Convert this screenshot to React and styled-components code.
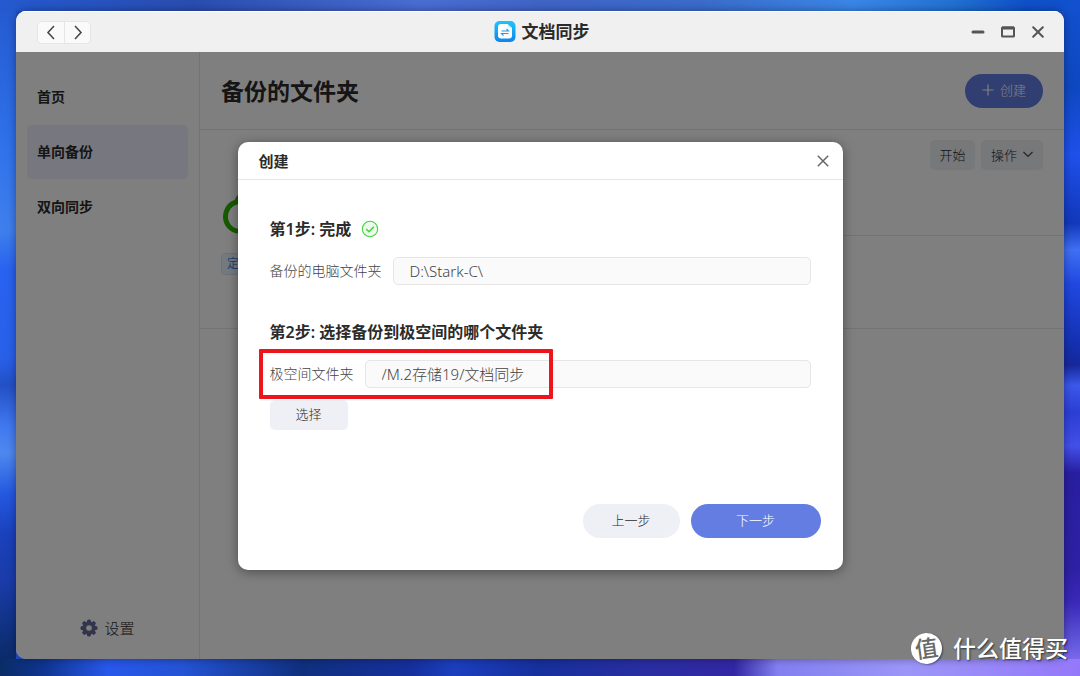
import React, { useState } from 'react';
import styled, { createGlobalStyle, ThemeProvider } from 'styled-components';

const theme = {
	colors: {
		primary: '#637de2',
		text: '#2b2b2b',
		label: '#444444',
		soft: '#eff0f5',
		line: '#e6e6e6',
		field: '#fafafa',
		green: '#3fd43a',
		red: '#ee141c',
	},
};

const GlobalStyle = createGlobalStyle`
	* {
		box-sizing: border-box;
	}
	body {
		margin: 0;
		font-family: "Noto Sans", "Noto Sans CJK SC", sans-serif;
		color: ${theme.colors.text};
	}
	button, input {
		font-family: inherit;
	}
	button {
		cursor: pointer;
	}
	h1, h2, h3, p {
		margin: 0;
	}
`;

const Desktop = styled.div`
	position: relative;
	display: flex;
	min-height: 100vh;
	padding: 11px 16px 17px;
	background:
		linear-gradient(90deg, #2459cf 0%, #2a4db0 18%, #4a6dd3 39%, #4064c6 50%, #3a6ccb 65%, #3a86e6 79%, #2272d2 88%, #0f50c8 95%, #1250cf 100%) top / 100% 11px no-repeat,
		linear-gradient(90deg, #0a2c66 0%, #0f3590 4%, #2858ea 10%, #2453d4 17%, #10307e 28%, #16309c 38%, #1c3fbe 42%, #16309c 50%, #2a2ea0 60%, #3327a4 68%, #8280f0 72%, #9c96f8 84%, #9478fa 100%) bottom / 100% 17px no-repeat,
		linear-gradient(180deg, #2459cf 0%, #2f72ea 22%, #3f7fec 34%, #2862f0 40%, #2860e8 53%, #2350c4 57%, #4078f0 63%, #4f88ee 67%, #2458e0 73%, #1a41bc 79%, #1a3ca8 86%, #0a2a66 98%) left / 16px 100% no-repeat,
		linear-gradient(180deg, #1250cf 0%, #0e48c0 13%, #1f50ea 23%, #1238ba 33%, #4070f4 37%, #2048e0 42%, #1430b0 51%, #16289a 54%, #3b58ea 57%, #2c3ed4 61%, #4250e8 66%, #281ea0 70%, #2e20a4 84%, #3a28b8 89%, #6258dc 95%, #9478fa 100%) right / 16px 100% no-repeat,
		#2350c4;
`;

const Window = styled.div`
	flex: 1;
	display: flex;
	flex-direction: column;
	min-width: 0;
	border-radius: 10px;
	overflow: hidden;
	background-color: #ffffff;
	box-shadow: 0 0 8px rgba(0, 0, 30, 0.4);
`;

const TitleBar = styled.header`
	display: grid;
	grid-template-columns: 1fr auto 1fr;
	align-items: center;
	height: 41px;
	padding: 0 18px 0 21px;
	background-color: #f0f0f0;
	border-top: 1px solid #ffffff;
`;

const NavButtons = styled.div`
	display: flex;
	justify-self: start;
	border: 1px solid #e6e6e6;
	border-radius: 5px;
	background-color: #fafafa;
`;

const NavButton = styled.button`
	display: flex;
	align-items: center;
	justify-content: center;
	width: 26px;
	height: 21px;
	padding: 0;
	border: 0;
	background: none;
	& + & {
		border-left: 1px solid #e6e6e6;
	}
`;

const AppName = styled.h1`
	display: flex;
	align-items: center;
	gap: 6px;
	font-size: 17px;
	line-height: 24px;
	font-weight: 600;
`;

const WindowButtons = styled.div`
	display: flex;
	justify-self: end;
	gap: 14px;
`;

const IconButton = styled.button`
	display: flex;
	align-items: center;
	justify-content: center;
	width: 16px;
	height: 16px;
	padding: 0;
	border: 0;
	background: none;
`;

const Body = styled.div`
	position: relative;
	flex: 1;
	display: flex;
`;

const Sidebar = styled.nav`
	display: flex;
	flex-direction: column;
	width: 184px;
	padding: 18px 11px;
	border-right: 1px solid ${props => props.theme.colors.line};
`;

const SideLink = styled.a`
	height: 54px;
	margin-bottom: 1px;
	padding-left: 10px;
	border-radius: 5px;
	background-color: ${props => (props.$active ? '#eeeffe' : 'transparent')};
	color: ${props => props.theme.colors.text};
	font-size: 14px;
	line-height: 54px;
	font-weight: 700;
	text-decoration: none;
`;

const Settings = styled.button`
	display: flex;
	align-items: center;
	justify-content: center;
	gap: 6px;
	margin-top: auto;
	padding: 0;
	border: 0;
	background: none;
	color: ${props => props.theme.colors.text};
	font-size: 15px;
	line-height: 26px;
	font-weight: 300;
`;

const Main = styled.main`
	flex: 1;
	min-width: 0;
`;

const PageHeader = styled.div`
	display: flex;
	align-items: center;
	justify-content: space-between;
	height: 78px;
	padding: 0 21px;
	border-bottom: 1px solid ${props => props.theme.colors.line};
`;

const PageTitle = styled.h2`
	font-size: 23px;
	line-height: 32px;
	font-weight: 700;
`;

const Pill = styled.button`
	display: flex;
	align-items: center;
	justify-content: center;
	gap: 6px;
	width: ${props => props.$width};
	height: 34px;
	padding: 0 0 2px;
	border: 0;
	border-radius: 17px;
	background-color: ${props => (props.$primary ? props.theme.colors.primary : props.theme.colors.soft)};
	color: ${props => (props.$primary ? '#ffffff' : props.theme.colors.text)};
	font-size: 13px;
	font-weight: 300;
`;

const Task = styled.section`
	display: grid;
	grid-template-columns: 80px 1fr;
	height: 199px;
	border-bottom: 1px solid ${props => props.theme.colors.line};
`;

const TaskStatus = styled.div`
	display: flex;
	flex-direction: column;
	align-items: flex-start;
	gap: 15px;
	padding: 64px 0 0 21px;
`;

const Tag = styled.span`
	width: 40px;
	padding-left: 5px;
	border: 1px solid #d4e6fb;
	border-radius: 4px;
	background-color: #ebf4ff;
	color: #3d8df0;
	font-size: 12px;
	line-height: 20px;
`;

const TaskActions = styled.div`
	display: flex;
	justify-content: flex-end;
	gap: 6px;
	height: 106px;
	padding: 10px 21px 0 0;
	border-bottom: 1px solid ${props => props.theme.colors.line};
`;

const SmallButton = styled.button`
	display: flex;
	align-items: center;
	justify-content: center;
	gap: 6px;
	width: ${props => props.$width};
	height: 30px;
	padding: 0 0 2px;
	border: 0;
	border-radius: 5px;
	background-color: ${props => props.theme.colors.soft};
	color: ${props => props.theme.colors.text};
	font-size: 13px;
	font-weight: 300;
`;

const Overlay = styled.div`
	position: absolute;
	inset: 0;
	display: flex;
	align-items: center;
	justify-content: center;
	background-color: rgba(0, 0, 0, 0.5);
`;

const Modal = styled.div`
	width: 605px;
	max-width: 100%;
	border-radius: 10px;
	background-color: #ffffff;
	box-shadow: 0 2px 12px rgba(0, 0, 0, 0.4);
`;

const ModalHeader = styled.div`
	display: flex;
	align-items: center;
	justify-content: space-between;
	height: 38px;
	padding: 2px 12px 0 21px;
	border-bottom: 1px solid ${props => props.theme.colors.line};
`;

const ModalTitle = styled.h2`
	font-size: 15px;
	line-height: 24px;
	font-weight: 600;
`;

const ModalBody = styled.form`
	display: flex;
	flex-direction: column;
	padding: 37px 32px 0;
`;

const Step = styled.section`
	display: flex;
	flex-direction: column;
	gap: 12px;
	& + & {
		margin-top: 35px;
	}
`;

const StepTitle = styled.h3`
	display: flex;
	align-items: center;
	gap: 10px;
	margin-bottom: 4px;
	font-size: 16px;
	line-height: 24px;
	font-weight: 600;
`;

const Field = styled.div`
	position: relative;
	display: flex;
	align-items: center;
	gap: 11px;
`;

const Label = styled.label`
	color: ${props => props.theme.colors.label};
	font-size: 14px;
	line-height: 24px;
	font-weight: 300;
`;

const Input = styled.input`
	flex: 1;
	min-width: 0;
	height: 28px;
	padding: 0 16px;
	border: 1px solid ${props => props.theme.colors.line};
	border-radius: 5px;
	background-color: ${props => props.theme.colors.field};
	color: ${props => props.theme.colors.label};
	font-size: 15px;
	font-weight: 300;
`;

const Highlight = styled.span`
	position: absolute;
	top: -11px;
	left: -11px;
	width: 294px;
	height: 50px;
	border: 4px solid ${props => props.theme.colors.red};
	border-radius: 1px;
	pointer-events: none;
`;

const Footer = styled.div`
	display: flex;
	justify-content: flex-end;
	gap: 11px;
	padding: 74px 22px 32px;
`;

const Watermark = styled.div`
	position: absolute;
	right: 12px;
	bottom: 11px;
	display: flex;
	align-items: center;
	gap: 11px;
	color: #ffffff;
	font-size: 23px;
	line-height: 34px;
	font-weight: 500;
	text-shadow: 1px 1px 2px rgba(0, 0, 0, 0.6);
`;

const Seal = styled.span`
	width: 31px;
	height: 31px;
	border-radius: 50%;
	background-color: #ffffff;
	color: #6a6a6a;
	font-size: 23px;
	line-height: 30px;
	text-align: center;
	text-shadow: none;
	transform: rotate(-8deg);
	box-shadow: 1px 1px 2px rgba(0, 0, 0, 0.4);
`;

const LineIcon = ({ d, width, height, color = '#4a4a4a', stroke = 1.6 }) => (
	<svg width={width} height={height} viewBox={`0 0 ${width} ${height}`} fill="none" stroke={color} strokeWidth={stroke}>
		<path d={d} />
	</svg>
);

const AppLogo = () => (
	<svg width="22" height="22" viewBox="0 0 22 22">
		<defs>
			<linearGradient id="logo" x1="0" y1="0" x2="0" y2="1">
				<stop offset="0" stopColor="#1fc4fa" />
				<stop offset="1" stopColor="#0b86ea" />
			</linearGradient>
		</defs>
		<rect x="0.5" y="0" width="21" height="21" rx="5" fill="url(#logo)" />
		<path d="M7 3h6.5L18 7v7.500a3 3 0 0 1-3 3H7a3 3 0 0 1-3-3V6a3 3 0 0 1 3-3z" fill="#ffffff" />
		<path d="M13.5 3v2a2 2 0 0 0 2 2H18z" fill="#cdeeff" />
		<path d="M7.5 10h7l-2-2M14.5 12.5h-7l2 2" fill="none" stroke="#1d9df0" strokeWidth="1.1" />
	</svg>
);

const Gear = () => (
	<svg width="18" height="18" viewBox="0 0 18 18">
		<g fill="#646b96">
			{[0, 45, 90, 135].map(angle => (
				<rect key={angle} x="7" y="0.5" width="4" height="17" rx="1.5" transform={`rotate(${angle} 9 9)`} />
			))}
			<circle cx="9" cy="9" r="6.6" />
		</g>
		<circle cx="9" cy="9" r="2.8" fill="#ffffff" />
	</svg>
);

const Cloud = () => (
	<svg width="60" height="44" viewBox="0 0 60 44" fill="none" stroke="#2fb400" strokeWidth="5">
		<path d="M20 37.5C10 37.5 4.5 30 4.5 23C4.5 15.500 9 9.500 15.500 8C18 0 25 -2 32 2C38 5 46 4 50 14C57 20 55 37.5 44 37.5Z" />
	</svg>
);

const Check = () => (
	<svg width="18" height="18" viewBox="0 0 18 18" fill="none" stroke={theme.colors.green}>
		<circle cx="9" cy="9" r="7.7" fill="#eafbe9" strokeWidth="1.1" />
		<path d="M5.2 9l2.8 2.700 4.9-5" strokeWidth="1.5" />
	</svg>
);

const App = () => {
	const [source, setSource] = useState('D:\\Stark-C\\');
	const [target, setTarget] = useState('/M.2存储19/文档同步');

	return (
		<ThemeProvider theme={theme}>
			<GlobalStyle />
			<Desktop>
				<Window>
					<TitleBar>
						<NavButtons>
							<NavButton aria-label="后退">
								<LineIcon d="M8 1L2 7.5L8 14" width={10} height={15} />
							</NavButton>
							<NavButton aria-label="前进">
								<LineIcon d="M2 1L8 7.5L2 14" width={10} height={15} />
							</NavButton>
						</NavButtons>
						<AppName><AppLogo />文档同步</AppName>
						<WindowButtons>
							<IconButton aria-label="最小化">
								<svg width="14" height="14" viewBox="0 0 14 14">
									<rect x="0.5" y="5.5" width="13" height="3" rx="1.5" fill="#555555" />
								</svg>
							</IconButton>
							<IconButton aria-label="最大化">
								<svg width="14" height="12" viewBox="0 0 14 12" fill="none" stroke="#555555">
									<rect x="1" y="1.5" width="12" height="9" rx="0.5" strokeWidth="2" />
									<path d="M1 2h12" strokeWidth="3" />
								</svg>
							</IconButton>
							<IconButton aria-label="关闭">
								<svg width="12" height="12" viewBox="0 0 12 12" stroke="#555555" strokeWidth="2" strokeLinecap="round">
									<path d="M1.2 1.2l9.6 9.6M10.8 1.2l-9.6 9.6" />
								</svg>
							</IconButton>
						</WindowButtons>
					</TitleBar>

					<Body>
						<Sidebar>
							<SideLink href="#home">首页</SideLink>
							<SideLink href="#backup" $active>单向备份</SideLink>
							<SideLink href="#sync">双向同步</SideLink>
							<Settings><Gear />设置</Settings>
						</Sidebar>

						<Main>
							<PageHeader>
								<PageTitle>备份的文件夹</PageTitle>
								<Pill $primary $width="78px">
									<LineIcon d="M6 0.5v11M0.5 6h11" width={12} height={12} color="#ffffff" stroke={1.2} />
									创建
								</Pill>
							</PageHeader>
							<Task>
								<TaskStatus>
									<Cloud />
									<Tag>定</Tag>
								</TaskStatus>
								<div>
									<TaskActions>
										<SmallButton $width="45px">开始</SmallButton>
										<SmallButton $width="62px">
											操作
											<LineIcon d="M0.5 1L5 5.5L9.5 1" width={10} height={7} stroke={1.2} />
										</SmallButton>
									</TaskActions>
								</div>
							</Task>
						</Main>

						<Overlay>
							<Modal role="dialog" aria-labelledby="dialog-title">
								<ModalHeader>
									<ModalTitle id="dialog-title">创建</ModalTitle>
									<IconButton aria-label="关闭">
										<svg width="12" height="12" viewBox="0 0 12 12" stroke="#666666" strokeWidth="1.5">
											<path d="M0.8 0.8l10.4 10.4M11.2 0.8l-10.4 10.4" />
										</svg>
									</IconButton>
								</ModalHeader>
								<ModalBody>
									<Step>
										<StepTitle>第1步: 完成 <Check /></StepTitle>
										<Field>
											<Label htmlFor="source">备份的电脑文件夹</Label>
											<Input id="source" value={source} onChange={e => setSource(e.target.value)} />
										</Field>
									</Step>
									<Step>
										<StepTitle>第2步: 选择备份到极空间的哪个文件夹</StepTitle>
										<Field>
											<Label htmlFor="target">极空间文件夹</Label>
											<Input id="target" value={target} onChange={e => setTarget(e.target.value)} />
											<Highlight />
										</Field>
										<SmallButton type="button" $width="78px">选择</SmallButton>
									</Step>
								</ModalBody>
								<Footer>
									<Pill $width="97px">上一步</Pill>
									<Pill $primary $width="130px">下一步</Pill>
								</Footer>
							</Modal>
						</Overlay>
					</Body>
				</Window>
				<Watermark><Seal>值</Seal>什么值得买</Watermark>
			</Desktop>
		</ThemeProvider>
	);
};

export default App;
